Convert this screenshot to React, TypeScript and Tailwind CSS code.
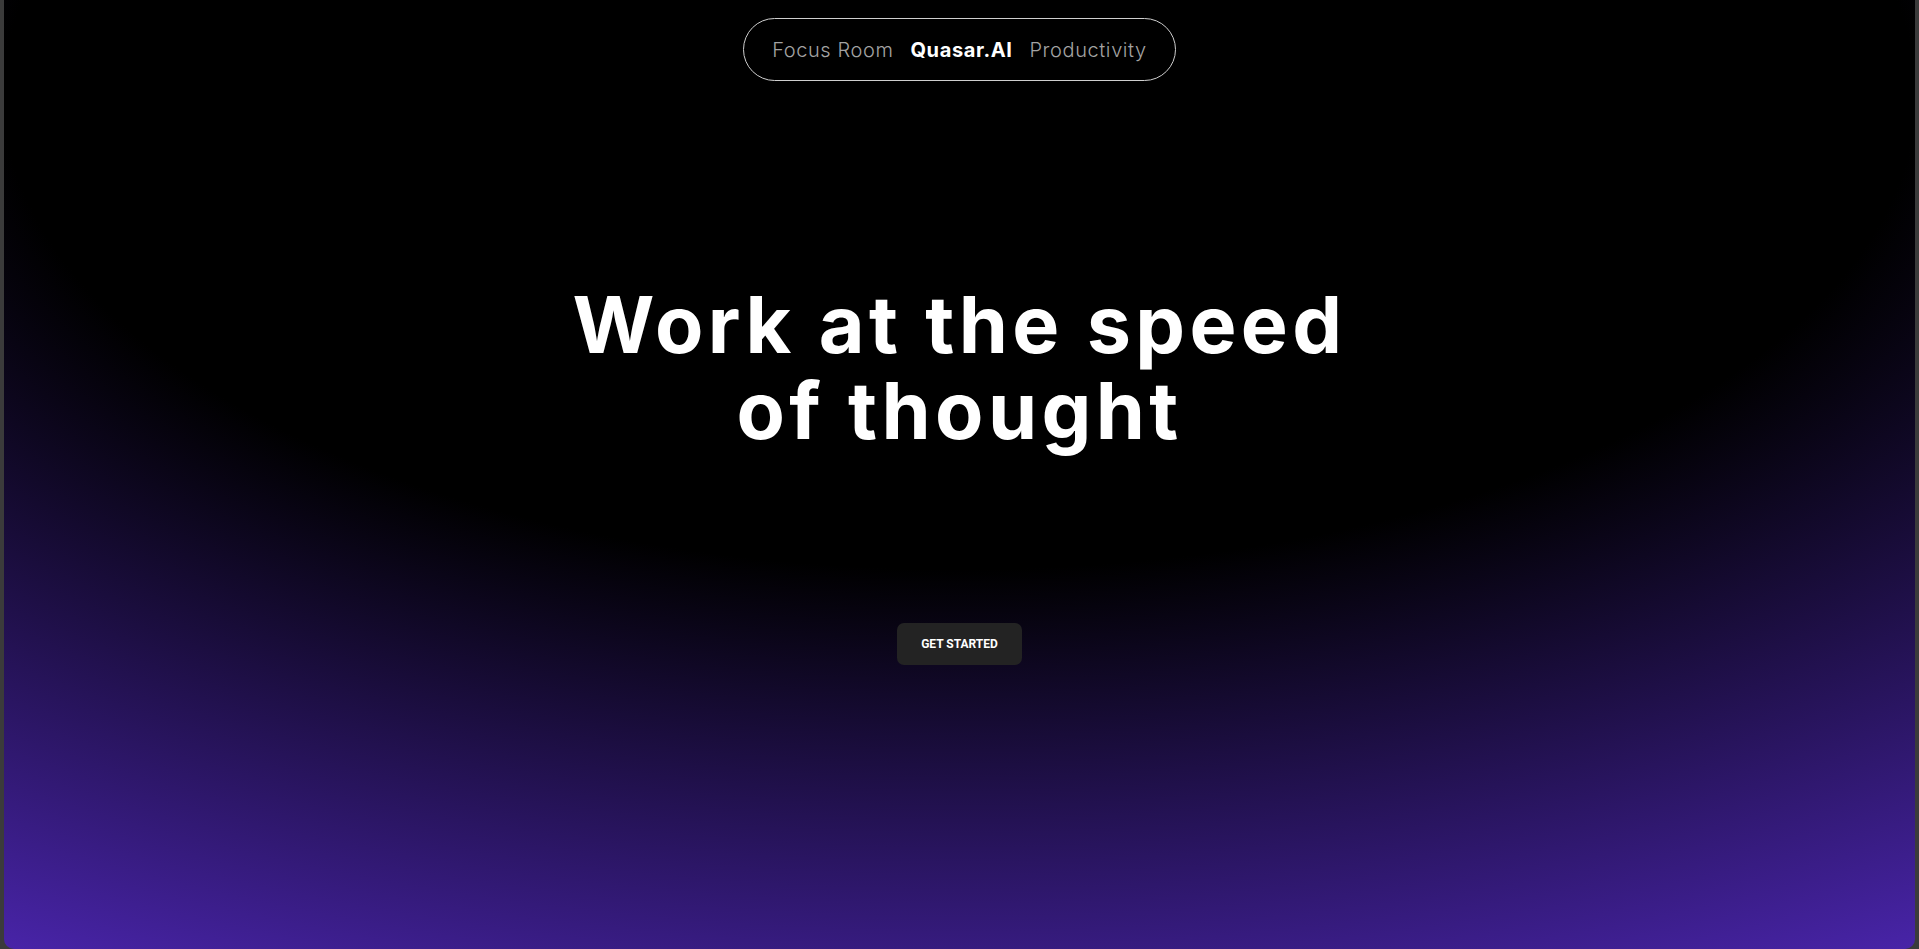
export default function App() {
  return (
    <div className="h-[949px] w-full bg-[#3b3b3b] px-[4px] font-['Inter',sans-serif]">
      <div className="flex h-full flex-col items-center rounded-b-[10px] bg-[radial-gradient(125%_125%_at_50%_10%,#000_40%,#63e_100%)]">
        <nav className="mt-[18px] flex h-[63px] items-center gap-[17px] rounded-full border border-[#cfcfcf] px-[28px] text-[20px] tracking-[0.03em]">
          <a className="font-light text-[#a3a3a3]">Focus Room</a>
          <a className="font-bold text-white">Quasar.AI</a>
          <a className="font-light text-[#a3a3a3]">Productivity</a>
        </nav>
        <h1 className="mt-[200px] text-center text-[79px] leading-[86px] font-bold tracking-[0.055em] text-white">
          Work at the speed
          <br />
          of thought
        </h1>
        <button className="mt-[170px] rounded-[7px] bg-[#232323] px-[24px] py-[12px] font-['Roboto',sans-serif] text-[12px] font-bold uppercase text-white">
          Get Started
        </button>
      </div>
    </div>
  );
}
